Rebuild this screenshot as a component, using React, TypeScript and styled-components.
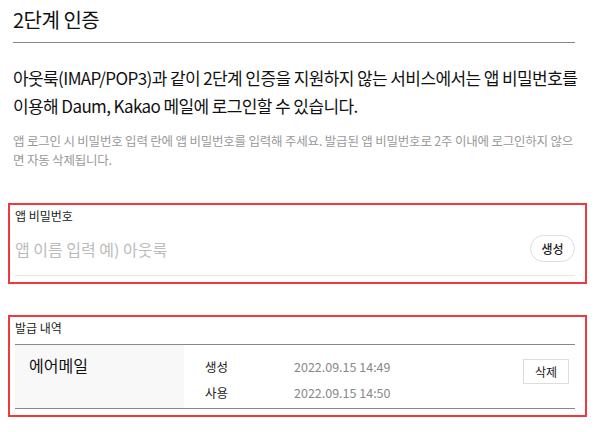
import React from "react";
import styled, { createGlobalStyle } from "styled-components";

const GlobalStyle = createGlobalStyle`
  html, body {
    margin: 0;
    padding: 0;
    background: #fff;
  }
  body {
    font-family: "Noto Sans CJK KR", "Noto Sans", sans-serif;
    color: #222;
  }
`;

const Page = styled.div`
  width: 562px;
  padding: 0 25px 0 13px;
`;

const Header = styled.div`
  height: 43px;
  border-bottom: 1px solid #888;
  box-sizing: border-box;
`;

const Title = styled.h2`
  margin: 0;
  padding-top: 6px;
  font-size: 20px;
  line-height: 28px;
  font-weight: 400;
  color: #111;
  letter-spacing: -0.5px;
`;

const Intro = styled.p`
  margin: 21px -4px 0 0;
  font-size: 17px;
  line-height: 28px;
  color: #111;
  letter-spacing: -0.6px;
`;

const Note = styled.p`
  margin: 11px -4px 0 0;
  font-size: 12.5px;
  line-height: 19px;
  color: #999;
  letter-spacing: -0.2px;
`;

const Section = styled.section<{ $top: number }>`
  margin: ${(p) => p.$top}px -12px 0 -5px;
  border: 2px solid #f0393e;
  padding: 2px 10px 6px 5px;
`;

const Label = styled.div`
  font-size: 12px;
  line-height: 18px;
  color: #222;
`;

const InputRow = styled.div`
  display: flex;
  align-items: center;
  justify-content: space-between;
  margin-top: 10px;
  padding-bottom: 13px;
  border-bottom: 1px solid #e6e6e6;
`;

const Input = styled.input`
  flex: 1;
  border: 0;
  outline: none;
  padding: 0;
  font-family: inherit;
  font-size: 16px;
  color: #222;
  &::placeholder {
    color: #bbb;
  }
`;

const PillButton = styled.button`
  width: 45px;
  height: 27px;
  border: 1px solid #ddd;
  border-radius: 14px;
  background: #fff;
  font-family: inherit;
  font-size: 12px;
  font-weight: 500;
  color: #222;
  padding: 0;
`;

const Table = styled.div`
  display: flex;
  margin-top: 7px;
  border-top: 1px solid #888;
  border-bottom: 1px solid #888;
  height: 65px;
  box-sizing: border-box;
`;

const NameCell = styled.div`
  width: 169px;
  background: #f8f8f8;
  padding: 8px 0 0 14px;
  box-sizing: border-box;
  font-size: 16px;
  line-height: 24px;
  color: #111;
`;

const InfoCell = styled.div`
  flex: 1;
  display: flex;
  justify-content: space-between;
  padding: 11px 6px 0 21px;
`;

const InfoList = styled.dl`
  margin: 0;
  display: grid;
  grid-template-columns: 89px auto;
  font-size: 12.5px;
  line-height: 22px;
`;

const InfoTerm = styled.dt`
  color: #222;
`;

const InfoValue = styled.dd`
  margin: 0;
  color: #888;
`;

const SquareButton = styled.button`
  width: 46px;
  height: 25px;
  margin-top: 3px;
  border: 1px solid #ddd;
  background: #fff;
  font-family: inherit;
  font-size: 12px;
  color: #222;
  padding: 0;
`;

const App = () => {
  return (
    <>
      <GlobalStyle />
      <Page>
        <Header>
          <Title>2단계 인증</Title>
        </Header>
        <Intro>
          아웃룩(IMAP/POP3)과 같이 2단계 인증을 지원하지 않는 서비스에서는 앱 비밀번호를 이용해 Daum, Kakao 메일에 로그인할 수 있습니다.
        </Intro>
        <Note>
          앱 로그인 시 비밀번호 입력 란에 앱 비밀번호를 입력해 주세요. 발급된 앱 비밀번호로 2주 이내에 로그인하지 않으면 자동 삭제됩니다.
        </Note>

        <Section $top={34}>
          <Label>앱 비밀번호</Label>
          <InputRow>
            <Input placeholder="앱 이름 입력 예) 아웃룩" />
            <PillButton>생성</PillButton>
          </InputRow>
        </Section>

        <Section $top={31}>
          <Label>발급 내역</Label>
          <Table>
            <NameCell>에어메일</NameCell>
            <InfoCell>
              <InfoList>
                <InfoTerm>생성</InfoTerm>
                <InfoValue>2022.09.15 14:49</InfoValue>
                <InfoTerm>사용</InfoTerm>
                <InfoValue>2022.09.15 14:50</InfoValue>
              </InfoList>
              <SquareButton>삭제</SquareButton>
            </InfoCell>
          </Table>
        </Section>
      </Page>
    </>
  );
};

export default App;
